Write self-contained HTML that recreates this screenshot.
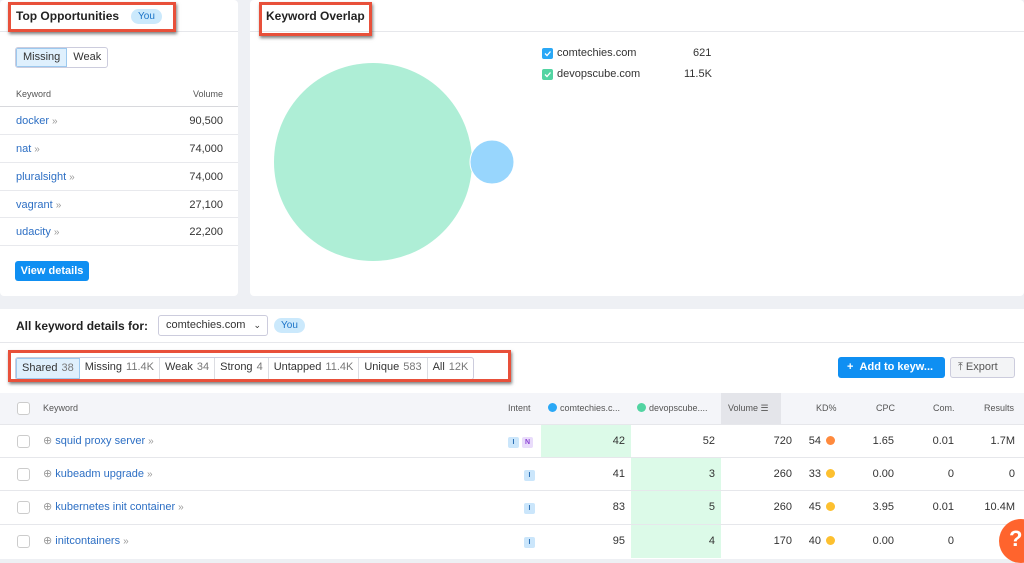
<!DOCTYPE html>
<html><head><meta charset="utf-8"><style>
*{box-sizing:border-box;margin:0;padding:0}
body{width:1024px;height:559px;overflow:hidden;background:#eef0f4;font-family:"Liberation Sans",sans-serif;color:#333;position:relative;font-size:11px}
.abs{position:absolute}
.card{position:absolute;background:#fff;border-radius:4px}
.red{position:absolute;border:3px solid #e8503a;box-shadow:1px 2px 3px rgba(0,0,0,.5)}
.link{color:#2d6fc4}
.chev{color:#999;font-size:10px;margin-left:3px}
.you{background:#cbe9fc;color:#1a73c7;border-radius:9px;padding:2px 7px;font-size:10px}
.row{position:absolute;left:0;width:238px;height:28px;border-top:1px solid #e8e9ed}
.row > span{position:absolute;top:8px}
.seg{display:inline-block;height:21px;line-height:19px;padding:0 5px;border-right:1px solid #dcdde2;font-size:11px;color:#333}
.seg b{font-weight:normal;color:#777;margin-left:4px}
.tr{position:absolute;left:0;width:1024px;height:34px;border-top:1px solid #e6e7eb}
.c{position:absolute;top:10px;text-align:right}
.cb{position:absolute;left:17px;top:10px;width:13px;height:13px;border:1px solid #ccc;border-radius:3px;background:#fff}
.dot{display:inline-block;width:9px;height:9px;border-radius:50%;margin-left:5px;vertical-align:-1px}
.ib{display:inline-block;width:11px;height:11px;border-radius:2px;background:#cbe6fb;color:#2a6fb5;font-size:7px;line-height:11px;text-align:center;font-weight:bold}
</style></head><body>

<div class="card" style="left:0;top:0;width:238px;height:296px">
  <div class="abs" style="left:0;top:31px;width:238px;border-top:1px solid #e6e7eb"></div>
  <div class="abs" style="left:16px;top:9px;font-size:12px;font-weight:bold;color:#222">Top Opportunities</div>
  <div class="abs you" style="left:131px;top:9px">You</div>
  <div class="abs" style="left:15px;top:47px;height:21px;border:1px solid #ccd;border-radius:3px;overflow:hidden;display:flex">
    <div style="background:#dff0fd;border:1px solid #9cc9ef;padding:0 6px;line-height:17px;font-size:11px">Missing</div>
    <div style="padding:0 6px;line-height:19px;font-size:11px">Weak</div>
  </div>
  <div class="abs" style="left:16px;top:89px;font-size:9px;color:#555">Keyword</div>
  <div class="abs" style="right:15px;top:89px;font-size:9px;color:#555">Volume</div>
  <div class="row" style="top:106px;border-top:1px solid #d8d9dd"><span class="link" style="left:16px">docker<span class="chev">»</span></span><span style="right:15px">90,500</span></div>
  <div class="row" style="top:134px"><span class="link" style="left:16px">nat<span class="chev">»</span></span><span style="right:15px">74,000</span></div>
  <div class="row" style="top:162px"><span class="link" style="left:16px">pluralsight<span class="chev">»</span></span><span style="right:15px">74,000</span></div>
  <div class="row" style="top:190px"><span class="link" style="left:16px">vagrant<span class="chev">»</span></span><span style="right:15px">27,100</span></div>
  <div class="row" style="top:217px"><span class="link" style="left:16px">udacity<span class="chev">»</span></span><span style="right:15px">22,200</span></div>
  <div class="row" style="top:245px;height:1px"></div>
  <div class="abs" style="left:15px;top:261px;width:74px;height:20px;background:#0f8ff2;border-radius:3px;color:#fff;font-weight:bold;font-size:11px;line-height:20px;text-align:center">View details</div>
</div>
<div class="red" style="left:8px;top:2px;width:168px;height:30px"></div>

<div class="card" style="left:250px;top:0;width:774px;height:296px">
  <div class="abs" style="left:0;top:31px;width:774px;border-top:1px solid #e6e7eb"></div>
  <div class="abs" style="left:16px;top:9px;font-size:12px;font-weight:bold;color:#222">Keyword Overlap</div>
  <svg class="abs" style="left:0;top:0" width="774" height="296">
    <circle cx="123" cy="162" r="99" fill="#aeeed6"/>
    <circle cx="242" cy="162" r="22" fill="#98d6fd" stroke="#fff" stroke-width="1"/>
    <rect x="292" y="48" width="11" height="11" rx="2" fill="#2aa8f6"/>
    <path d="M295 53.5l2 2 3.5-4" stroke="#fff" stroke-width="1.3" fill="none"/>
    <rect x="292" y="69" width="11" height="11" rx="2" fill="#52d4a2"/>
    <path d="M295 74.5l2 2 3.5-4" stroke="#fff" stroke-width="1.3" fill="none"/>
  </svg>
  <div class="abs" style="left:307px;top:47px">comtechies.com</div>
  <div class="abs" style="left:307px;top:68px">devopscube.com</div>
  <div class="abs" style="left:443px;top:47px">621</div>
  <div class="abs" style="left:434px;top:68px">11.5K</div>
</div>
<div class="red" style="left:259px;top:2px;width:113px;height:34px"></div>

<div class="card" style="left:0;top:309px;width:1024px;height:250px;border-radius:0">
  <div class="abs" style="left:16px;top:10px;font-size:12px;font-weight:bold;color:#222">All keyword details for:</div>
  <div class="abs" style="left:158px;top:6px;width:110px;height:21px;border:1px solid #ccd;border-radius:3px;padding-left:7px;line-height:19px;font-size:11px">comtechies.com <span style="position:absolute;right:6px;font-size:9px">⌄</span></div>
  <div class="abs you" style="left:274px;top:9px">You</div>
  <div class="abs" style="left:0;top:33px;width:1024px;border-top:1px solid #e6e7eb"></div>
  <div class="abs" style="left:15px;top:48px;height:23px;border:1px solid #ccd;border-radius:3px;display:flex;overflow:hidden;background:#fff">
    <div class="seg" style="background:#dff0fd;border:1px solid #9cc9ef">Shared<b>38</b></div>
    <div class="seg">Missing<b>11.4K</b></div>
    <div class="seg">Weak<b>34</b></div>
    <div class="seg">Strong<b>4</b></div>
    <div class="seg">Untapped<b>11.4K</b></div>
    <div class="seg">Unique<b>583</b></div>
    <div class="seg" style="border-right:none">All<b>12K</b></div>
  </div>
  <div class="abs" style="left:838px;top:48px;width:107px;height:21px;background:#0f8ff2;border-radius:3px;color:#fff;font-weight:bold;line-height:21px;padding-left:9px">+ &nbsp;Add to keyw...</div>
  <div class="abs" style="left:950px;top:48px;width:65px;height:21px;background:#f3f4f6;border:1px solid #ccd;border-radius:3px;color:#555;line-height:19px;padding-left:7px">⤒ Export</div>

  <div class="abs" style="left:0;top:84px;width:1024px;height:31px;background:#f4f5f9;font-size:9px;color:#555">
    <div class="cb" style="top:9px"></div>
    <div class="abs" style="left:43px;top:10px">Keyword</div>
    <div class="abs" style="left:508px;top:10px">Intent</div>
    <div class="abs" style="left:548px;top:10px"><span class="dot" style="background:#2aa8f6;margin:0 3px 0 0"></span>comtechies.c...</div>
    <div class="abs" style="left:637px;top:10px"><span class="dot" style="background:#52d4a2;margin:0 3px 0 0"></span>devopscube....</div>
    <div class="abs" style="left:721px;top:0;width:60px;height:31px;background:#e4e5ea;padding:10px 0 0 7px">Volume ☰</div>
    <div class="abs" style="left:816px;top:10px">KD%</div>
    <div class="abs" style="left:876px;top:10px">CPC</div>
    <div class="abs" style="left:933px;top:10px">Com.</div>
    <div class="abs" style="left:984px;top:10px">Results</div>
  </div>

  <div class="abs" style="left:541px;top:115px;width:90px;height:33px;background:#dcfae8"></div>
  <div class="abs" style="left:631px;top:148px;width:90px;height:101px;background:#dcfae8"></div>

  <div class="tr" style="top:115px"><div class="cb"></div><div class="abs" style="left:43px;top:9px"><span style="color:#999">⊕</span> <span class="link">squid proxy server</span><span class="chev">»</span></div>
   <div class="abs" style="left:508px;top:10px"><span class="ib">I</span> <span class="ib" style="background:#e9dcfb;color:#8a3fd4">N</span></div>
   <div class="c" style="right:399px">42</div><div class="c" style="right:309px">52</div><div class="c" style="right:232px">720</div><div class="c" style="right:189px">54<span class="dot" style="background:#ff8a3d"></span></div><div class="c" style="right:130px">1.65</div><div class="c" style="right:70px">0.01</div><div class="c" style="right:9px">1.7M</div></div>
  <div class="tr" style="top:148px"><div class="cb"></div><div class="abs" style="left:43px;top:9px"><span style="color:#999">⊕</span> <span class="link">kubeadm upgrade</span><span class="chev">»</span></div>
   <div class="abs" style="left:524px;top:10px"><span class="ib">I</span></div>
   <div class="c" style="right:399px">41</div><div class="c" style="right:309px">3</div><div class="c" style="right:232px">260</div><div class="c" style="right:189px">33<span class="dot" style="background:#fdc02f"></span></div><div class="c" style="right:130px">0.00</div><div class="c" style="right:70px">0</div><div class="c" style="right:9px">0</div></div>
  <div class="tr" style="top:181px"><div class="cb"></div><div class="abs" style="left:43px;top:9px"><span style="color:#999">⊕</span> <span class="link">kubernetes init container</span><span class="chev">»</span></div>
   <div class="abs" style="left:524px;top:10px"><span class="ib">I</span></div>
   <div class="c" style="right:399px">83</div><div class="c" style="right:309px">5</div><div class="c" style="right:232px">260</div><div class="c" style="right:189px">45<span class="dot" style="background:#fdc02f"></span></div><div class="c" style="right:130px">3.95</div><div class="c" style="right:70px">0.01</div><div class="c" style="right:9px">10.4M</div></div>
  <div class="tr" style="top:215px"><div class="cb"></div><div class="abs" style="left:43px;top:9px"><span style="color:#999">⊕</span> <span class="link">initcontainers</span><span class="chev">»</span></div>
   <div class="abs" style="left:524px;top:10px"><span class="ib">I</span></div>
   <div class="c" style="right:399px">95</div><div class="c" style="right:309px">4</div><div class="c" style="right:232px">170</div><div class="c" style="right:189px">40<span class="dot" style="background:#fdc02f"></span></div><div class="c" style="right:130px">0.00</div><div class="c" style="right:70px">0</div><div class="c" style="right:9px">12</div></div>
</div>
<div class="red" style="left:8px;top:350px;width:503px;height:32px"></div>
<div class="abs" style="left:999px;top:519px;width:44px;height:44px;border-radius:50%;background:#ff642d;color:#fff;font-size:22px;font-weight:bold;padding:7px 0 0 10px">?</div>
</body></html>
